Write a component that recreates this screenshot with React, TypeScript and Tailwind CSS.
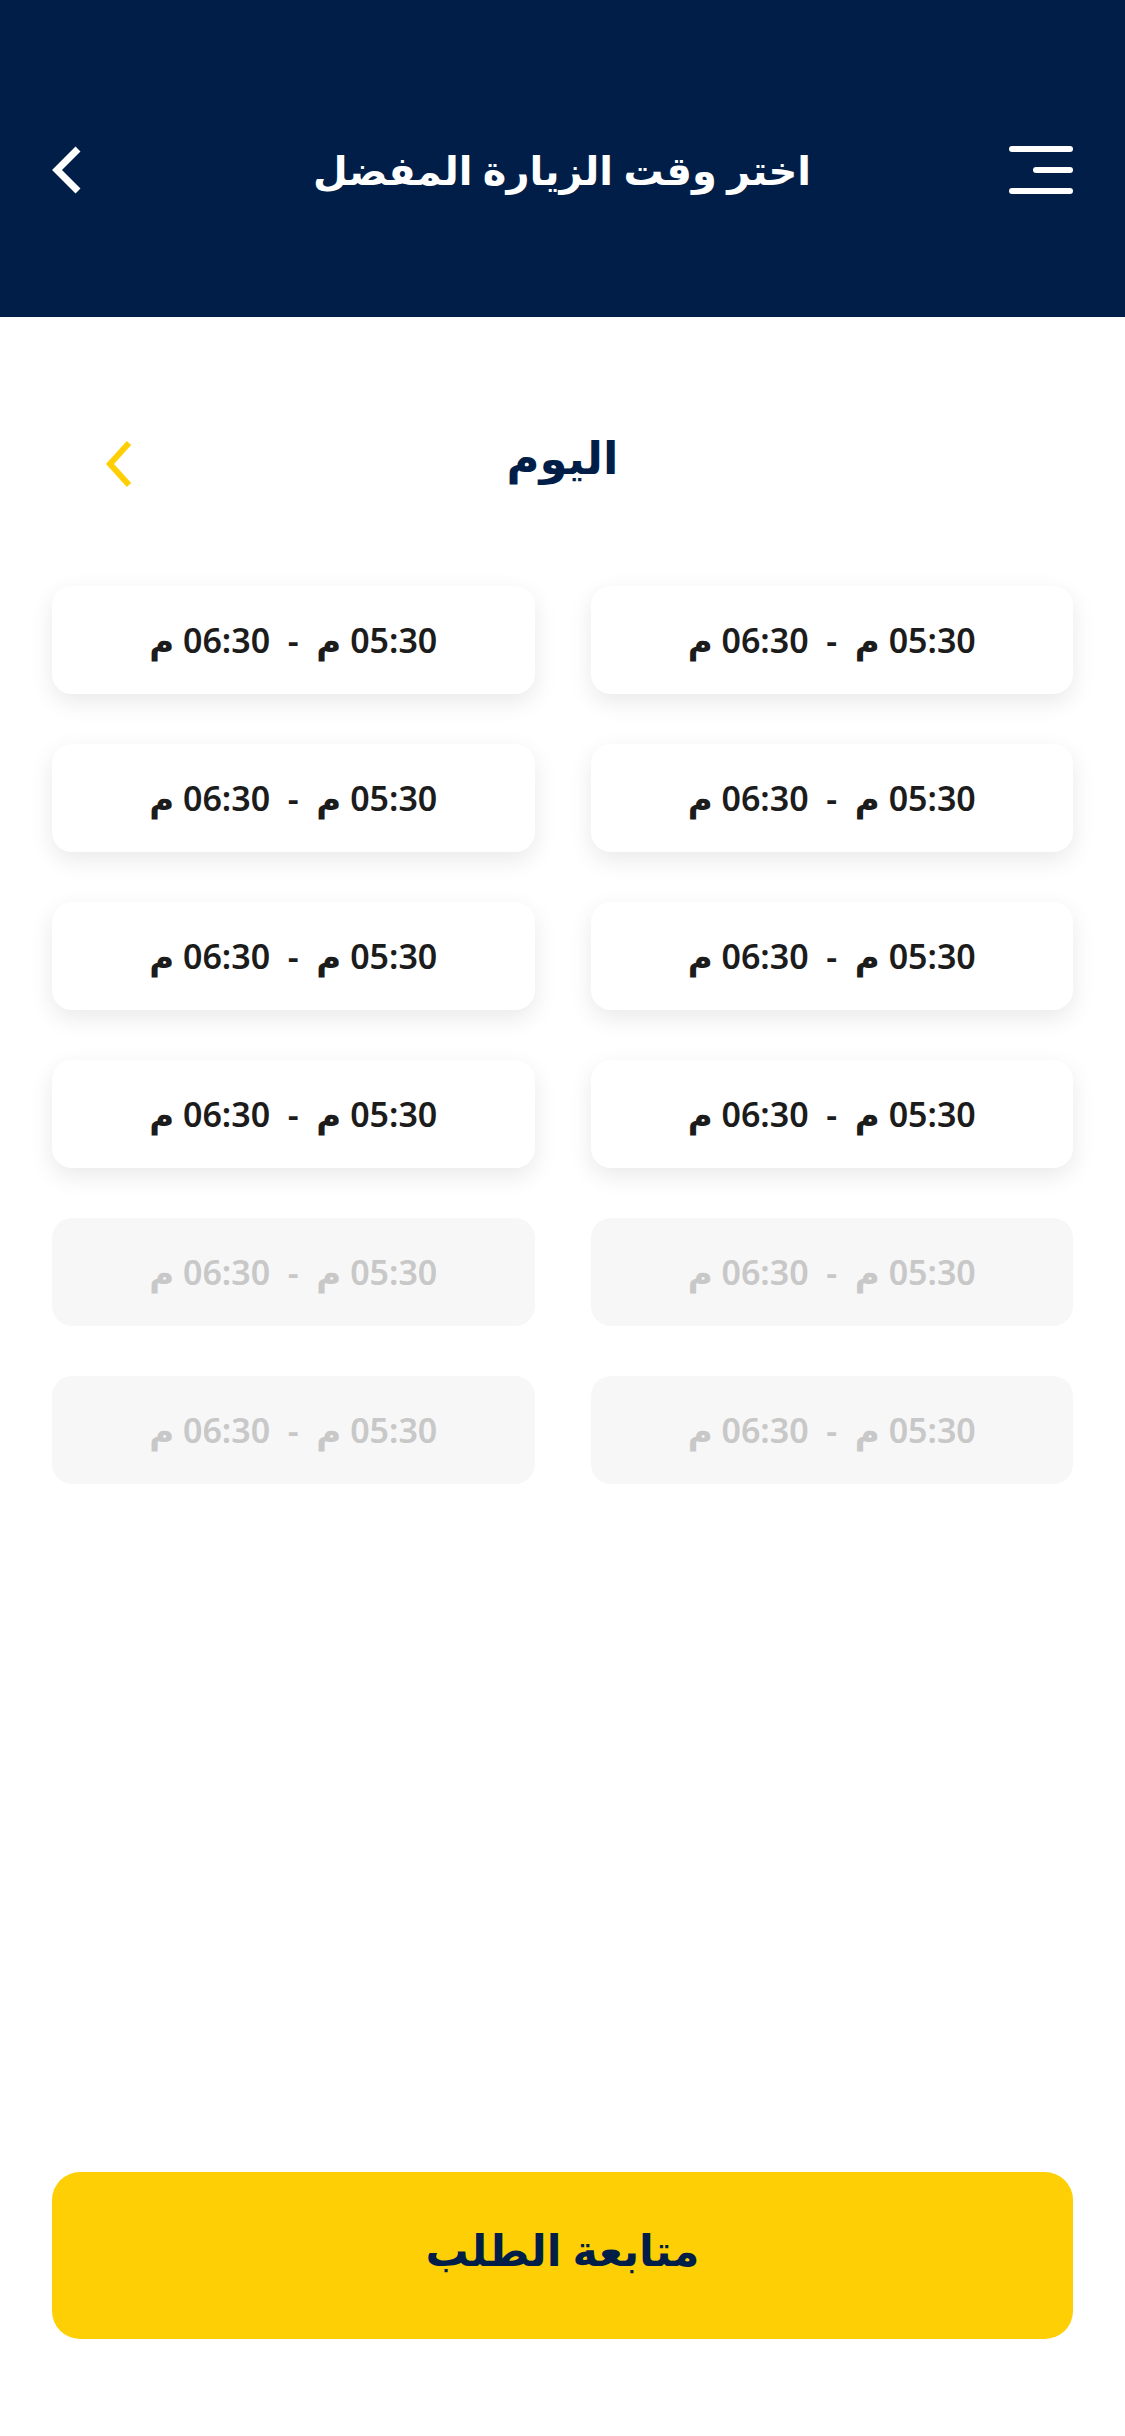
import React from "react";

const font = { fontFamily: '"Noto Sans", "DejaVu Sans", sans-serif' };

function Slot({ disabled }: { disabled?: boolean }) {
  return (
    <div
      className={
        disabled
          ? "h-[108px] rounded-[20px] bg-[#f7f7f7] flex items-center justify-center"
          : "h-[108px] rounded-[20px] bg-white shadow-[0_8px_24px_rgba(0,0,0,0.09)] flex items-center justify-center"
      }
    >
      <span
        dir="rtl"
        className={
          disabled
            ? "whitespace-pre text-[34px] font-semibold text-[#c8c8c8] leading-none"
            : "whitespace-pre text-[34px] font-semibold text-[#1c1c1c] leading-none"
        }
      >
        {"05:30 م  -  06:30 م"}
      </span>
    </div>
  );
}

export default function App() {
  const rows = [false, false, false, false, true, true];
  return (
    <div className="min-h-[2436px] w-full bg-white flex flex-col" style={font}>
      <header className="h-[317px] bg-[#001e48] pt-[23px] pl-[51px] pr-[52px] grid grid-cols-[1fr_auto_1fr] items-center">
        <div className="flex justify-start">
          <svg width="32" height="50" viewBox="0 0 32 50" fill="none">
            <polyline points="27,4 6,25 27,46" stroke="#ffffff" strokeWidth="7" strokeLinejoin="miter" />
          </svg>
        </div>
        <h1 dir="rtl" className="text-white text-[40px] font-bold leading-none">
          اختر وقت الزيارة المفضل
        </h1>
        <div className="flex justify-end">
          <div className="flex flex-col items-end gap-[15px]">
            <div className="h-[6px] w-[64px] rounded-full bg-white" />
            <div className="h-[6px] w-[40px] rounded-full bg-white" />
            <div className="h-[6px] w-[64px] rounded-full bg-white" />
          </div>
        </div>
      </header>

      <div className="mt-[112px] h-[70px] px-[103px] grid grid-cols-[1fr_auto_1fr] items-center">
        <div className="flex justify-start">
          <svg width="32" height="50" viewBox="0 0 32 50" fill="none">
            <polyline points="26,4 7,25 26,46" stroke="#ffcf06" strokeWidth="6" strokeLinejoin="miter" />
          </svg>
        </div>
        <div dir="rtl" className="text-[#001e48] text-[45px] font-bold leading-none -translate-y-[8px]">
          اليوم
        </div>
        <div />
      </div>

      <div className="mt-[87px] px-[52px] grid grid-cols-2 gap-x-[56px] gap-y-[50px]">
        {rows.map((d, i) => (
          <React.Fragment key={i}>
            <Slot disabled={d} />
            <Slot disabled={d} />
          </React.Fragment>
        ))}
      </div>

      <div className="flex-1" />

      <div className="mx-[52px] mb-[97px] h-[167px] rounded-[28px] bg-[#ffcf06] flex items-center justify-center">
        <span dir="rtl" className="text-[#001e48] text-[43px] font-bold leading-none -translate-y-[6px]">
          متابعة الطلب
        </span>
      </div>
    </div>
  );
}
